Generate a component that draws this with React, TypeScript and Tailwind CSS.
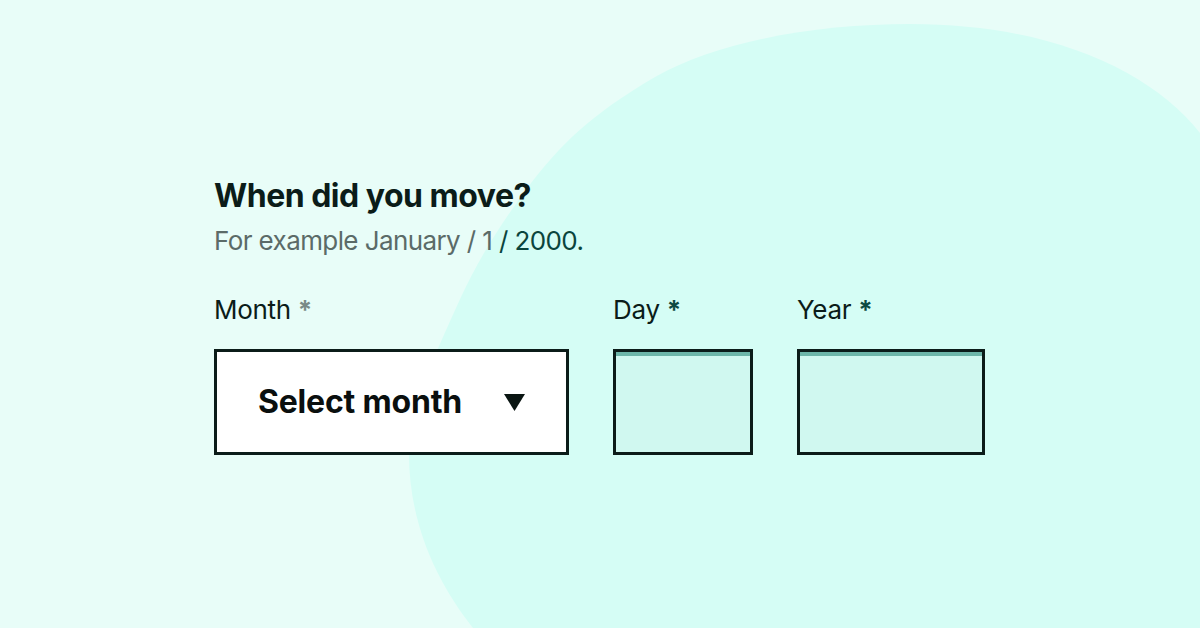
import React from 'react'

function Blob() {
  return (
    <svg className="absolute inset-0" width="1200" height="628" viewBox="0 0 1200 628" aria-hidden>
      <path
        d="M910,24 C820,24 720,40 655,77 C590,115 560,145 528,187 C500,225 478,260 461,297 C430,365 410,410 409,450 C408,520 435,580 473,628 L1200,628 L1200,133 C1150,70 1050,24 910,24 Z"
        fill="#d5fdf5"
      />
    </svg>
  )
}

function Label({ text, starClass }: { text: string; starClass: string }) {
  return (
    <div className="text-[26px] leading-[32px] tracking-[-0.3px] text-[#0b1c19]">
      {text}
      <span className={`ml-[7px] font-bold ${starClass}`}>*</span>
    </div>
  )
}

export default function App() {
  const boxClass = 'h-[106px] border-[3px] border-[#0b1c19] bg-[#d0f8f0] shadow-[inset_0_4px_0_0_#6db6a9]'

  return (
    <div className="relative w-[1200px] h-[628px] overflow-hidden bg-[#e8fdf8] font-['Inter',sans-serif]">
      <Blob />
      <div className="relative pl-[214px] pt-[177px]">
        <h1 className="text-[32px] leading-[38px] font-bold tracking-[-0.5px] text-[#0b1c19]">When did you move?</h1>
        <p className="mt-[10px] text-[26px] leading-[32px] tracking-[-0.6px] text-[#5b6b68]">
          For example January / 1 <span className="text-[#0a453d]">/ 2000.</span>
        </p>

        <div className="mt-[37px] flex gap-[44px]">
          <div className="w-[355px]">
            <Label text="Month" starClass="text-[#7a8a87]" />
            <div className="mt-[23px] h-[106px] border-[3px] border-[#0b1c19] bg-white flex items-center justify-between pl-[41px] pr-[41px]">
              <span className="text-[32px] font-bold tracking-[-0.2px] text-[#0a0f0e]">Select month</span>
              <svg width="21" height="17" viewBox="0 0 21 17">
                <polygon points="0,0 21,0 10.5,17" fill="#0a1512" />
              </svg>
            </div>
          </div>
          <div className="w-[140px]">
            <Label text="Day" starClass="text-[#0d4a42]" />
            <div className={`mt-[23px] ${boxClass}`} />
          </div>
          <div className="w-[188px]">
            <Label text="Year" starClass="text-[#0d4a42]" />
            <div className={`mt-[23px] ${boxClass}`} />
          </div>
        </div>
      </div>
    </div>
  )
}
